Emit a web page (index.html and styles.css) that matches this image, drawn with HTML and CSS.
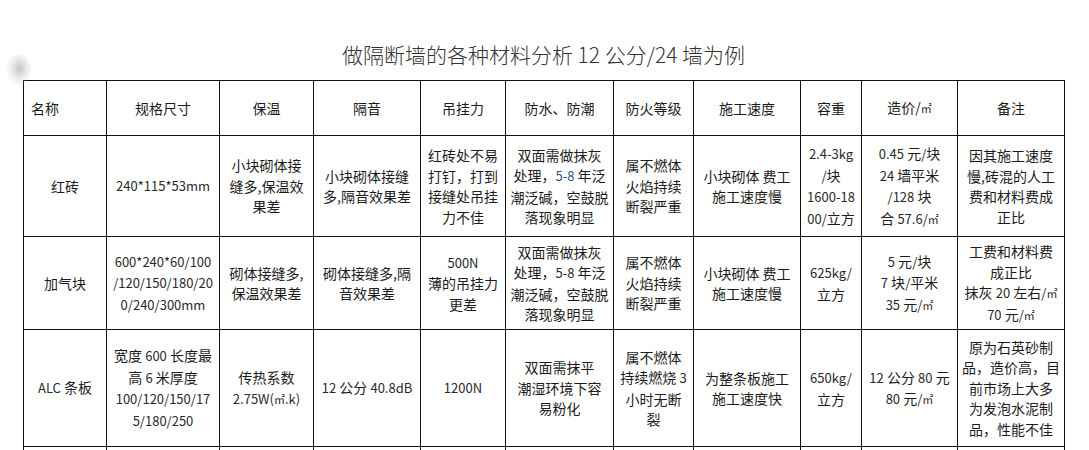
FILE: index.html
```html
<!DOCTYPE html>
<html lang="zh-CN">
<head>
<meta charset="utf-8">
<title>做隔断墙的各种材料分析</title>
<link rel="stylesheet" href="styles.css">
</head>
<body>
<div class="smudge"></div>
<div class="page">
  <h1 class="title">做隔断墙的各种材料分析 12 公分/24 墙为例</h1>
  <table class="grid">
    <colgroup>
      <col class="c1"><col class="c2"><col class="c3"><col class="c4"><col class="c5"><col class="c6"><col class="c7"><col class="c8"><col class="c9"><col class="c10"><col class="c11">
    </colgroup>
    <tr class="head">
      <td class="left">名称</td><td>规格尺寸</td><td>保温</td><td>隔音</td><td>吊挂力</td><td>防水、防潮</td><td>防火等级</td><td>施工速度</td><td>容重</td><td>造价/<span class="sq">㎡</span></td><td>备注</td>
    </tr>
    <tr class="r1">
      <td>红砖</td>
      <td><span class="n">240*115*53mm</span></td>
      <td>小块砌体接<br>缝多,保温效<br>果差</td>
      <td>小块砌体接缝<br>多,隔音效果差</td>
      <td>红砖处不易<br>打钉，打到<br>接缝处吊挂<br>力不佳</td>
      <td>双面需做抹灰<br>处理，<span class="n blue">5-8</span> 年泛<br>潮泛碱，空鼓脱<br>落现象明显</td>
      <td>属不燃体<br>火焰持续<br>断裂严重</td>
      <td>小块砌体 费工<br>施工速度慢</td>
      <td><span class="n">2.4-3kg</span><br><span class="n">/</span>块<br><span class="n">1600-18</span><br><span class="n">00/</span>立方</td>
      <td><span class="n">0.45</span> 元<span class="n">/</span>块<br><span class="n">24</span> 墙平米<br><span class="n">/128</span> 块<br>合 <span class="n">57.6/</span><span class="sq">㎡</span></td>
      <td>因其施工速度<br>慢,砖混的人工<br>费和材料费成<br>正比</td>
    </tr>
    <tr class="r2">
      <td>加气块</td>
      <td><span class="n">600*240*60/100<br>/120/150/180/20<br>0/240/300mm</span></td>
      <td>砌体接缝多,<br>保温效果差</td>
      <td>砌体接缝多,隔<br>音效果差</td>
      <td><span class="n">500N</span><br>薄的吊挂力<br>更差</td>
      <td>双面需做抹灰<br>处理，<span class="n">5-8</span> 年泛<br>潮泛碱，空鼓脱<br>落现象明显</td>
      <td>属不燃体<br>火焰持续<br>断裂严重</td>
      <td>小块砌体 费工<br>施工速度慢</td>
      <td><span class="n">625kg/</span><br>立方</td>
      <td><span class="n">5</span> 元<span class="n">/</span>块<br><span class="n">7</span> 块<span class="n">/</span>平米<br><span class="n">35</span> 元<span class="n">/</span><span class="sq">㎡</span></td>
      <td>工费和材料费<br>成正比<br>抹灰 <span class="n">20</span> 左右<span class="n">/</span><span class="sq">㎡</span><br><span class="n">70</span> 元<span class="n">/</span><span class="sq">㎡</span></td>
    </tr>
    <tr class="r3">
      <td><span class="n">ALC</span> 条板</td>
      <td>宽度 <span class="n">600</span> 长度最<br>高 <span class="n">6</span> 米厚度<br><span class="n">100/120/150/17<br>5/180/250</span></td>
      <td>传热系数<br><span class="n">2.75W(</span><span class="sq">㎡</span><span class="n">.k)</span></td>
      <td><span class="n">12</span> 公分 <span class="n">40.8dB</span></td>
      <td><span class="n">1200N</span></td>
      <td>双面需抹平<br>潮湿环境下容<br>易粉化</td>
      <td>属不燃体<br>持续燃烧 <span class="n">3</span><br>小时无断<br>裂</td>
      <td>为整条板施工<br>施工速度快</td>
      <td><span class="n">650kg/</span><br>立方</td>
      <td><span class="n">12</span> 公分 <span class="n">80</span> 元<br><span class="n">80</span> 元<span class="n">/</span><span class="sq">㎡</span></td>
      <td>原为石英砂制<br>品，造价高，目<br>前市场上大多<br>为发泡水泥制<br>品，性能不佳</td>
    </tr>
    <tr class="r4">
      <td></td><td></td><td></td><td></td><td></td><td></td><td></td><td></td><td></td><td></td><td></td>
    </tr>
  </table>
</div>
</body>
</html>
```
FILE: styles.css
```css
html, body {
  margin: 0;
  padding: 0;
  background: #ffffff;
}
body {
  font-family: "Noto Sans CJK SC", "Noto Sans", sans-serif;
  color: #1c1c1c;
  overflow: hidden;
}
.smudge {
  position: absolute;
  left: 5px;
  top: 54px;
  width: 26px;
  height: 32px;
  border-radius: 50%;
  background: radial-gradient(ellipse at 55% 45%, rgba(150,150,150,0.55) 0%, rgba(190,190,190,0.3) 40%, rgba(255,255,255,0) 72%);
}
.page {
  padding-left: 23px;
  width: 1041px;
}
.title {
  box-sizing: border-box;
  height: 80px;
  margin: 0;
  padding-top: 40px;
  line-height: 28px;
  font-size: 21px;
  font-weight: 300;
  color: #333;
  text-align: center;
}
.grid {
  border-collapse: collapse;
  table-layout: fixed;
  width: 1041px;
  font-size: 14px;
  line-height: 20.5px;
}
.grid td {
  border: 1px solid #111;
  padding: 0 2px;
  text-align: center;
  vertical-align: middle;
  white-space: nowrap;
  overflow: hidden;
}
.grid td.left {
  text-align: left;
  padding-left: 7px;
}
.n {
  font-size: 13px;
  color: #2a2a2a;
}
.sq {
  font-size: 11px;
}
.c1 { width: 83px; }
.c2 { width: 113px; }
.c3 { width: 94px; }
.c4 { width: 107px; }
.c5 { width: 85px; }
.c6 { width: 108px; }
.c7 { width: 80px; }
.c8 { width: 107px; }
.c9 { width: 61px; }
.c10 { width: 96px; }
.c11 { width: 107px; }
.head td { height: 54px; }
.r1 td { height: 100px; }
.r2 td { height: 92px; }
.r3 td { height: 116px; }
.r4 td { height: 60px; }
.n.blue { color: #2f4f86; }
```
